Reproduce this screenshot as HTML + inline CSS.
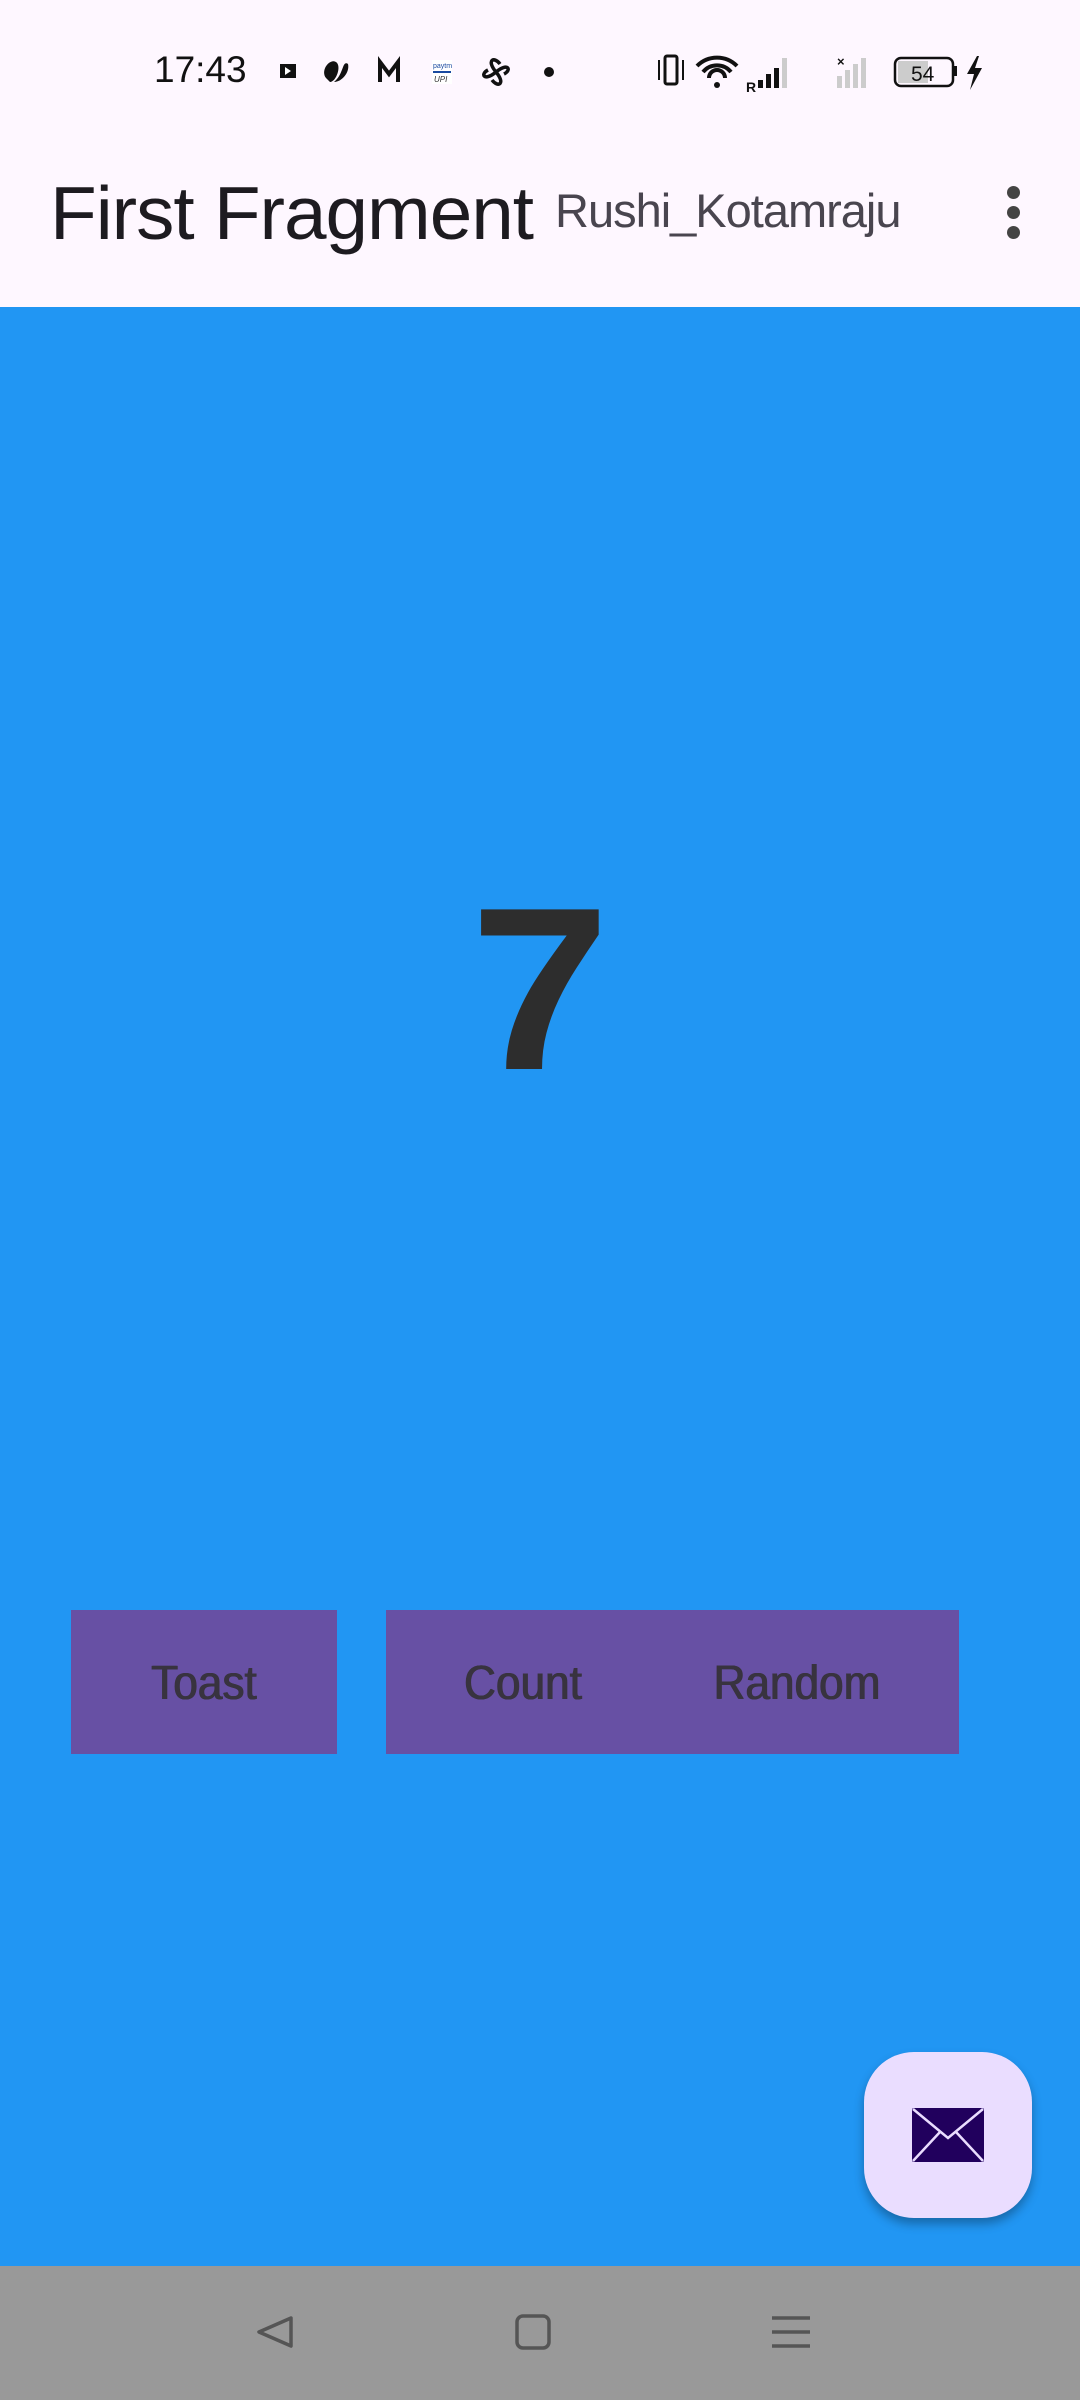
<!DOCTYPE html>
<html><head><meta charset="utf-8"><style>
*{margin:0;padding:0;box-sizing:border-box}
body{width:1080px;height:2400px;position:relative;overflow:hidden;background:#2196F3;font-family:"Liberation Sans",sans-serif}
.top{position:absolute;left:0;top:0;width:1080px;height:307px;background:#FEF7FF}
.abs{position:absolute;white-space:nowrap}
.btn{position:absolute;background:#6750A4;top:1610px;height:144px}
.bt{position:absolute;font-size:48px;color:#38333f;top:1656px;line-height:56px;transform:translateX(-50%) scaleX(0.92);text-shadow:0.6px 0 0 #38333f,-0.6px 0 0 #38333f}
.nav{position:absolute;left:0;top:2266px;width:1080px;height:134px;background:#999}
</style></head><body>
<div class="top"></div>
<div class="abs" style="left:154px;top:48px;font-size:37px;color:#111;line-height:44px">17:43</div>
<svg class="abs" style="left:270px;top:52px" width="300" height="40" viewBox="0 0 300 40">
<rect x="10" y="12" width="16" height="14" fill="#111"/><path d="M15 15 l6 4 l-6 4z" fill="#fff"/>
<path d="M56 26 C50 18 60 6 66 10 C72 14 66 30 60 30z M64 30 C74 22 72 8 78 12 C80 20 72 30 64 30z" fill="#111"/>
<path d="M110 30 V10 L119 22 L128 10 V30" stroke="#111" stroke-width="4" fill="none"/>
<rect x="162" y="8" width="20" height="24" fill="#fff"/><text x="163" y="16" font-size="7" fill="#1a4aa0" font-family="Liberation Sans">paytm</text><rect x="163" y="19" width="18" height="2" fill="#1a4aa0"/><text x="164" y="30" font-size="8" fill="#333" font-style="italic" font-family="Liberation Sans">UPI</text>
<path d="M226 20 C216 8 224 4 230 12 M226 20 C238 10 242 18 234 22 M226 20 C236 32 228 36 222 28 M226 20 C214 30 210 22 218 18" stroke="#111" stroke-width="3.5" fill="none"/>
<circle cx="279" cy="20" r="5" fill="#111"/>
</svg>
<svg class="abs" style="left:655px;top:50px" width="340" height="44" viewBox="0 0 340 44">
<rect x="10" y="6" width="12" height="28" rx="2" stroke="#111" stroke-width="3" fill="none"/><path d="M4 10 v20 M28 10 v20" stroke="#111" stroke-width="2"/>
<path d="M42 16 a28 28 0 0 1 40 0 M48 22 a18 18 0 0 1 28 0 M54 28 a8 8 0 0 1 16 0" stroke="#111" stroke-width="4" fill="none"/><circle cx="62" cy="35" r="3" fill="#111"/>
<text x="91" y="42" font-size="14" font-weight="bold" fill="#111" font-family="Liberation Sans">R</text>
<rect x="103" y="30" width="5" height="8" fill="#111"/><rect x="111" y="24" width="5" height="14" fill="#111"/><rect x="119" y="18" width="5" height="20" fill="#111"/><rect x="127" y="8" width="5" height="30" fill="#ccc"/>
<text x="182" y="16" font-size="13" font-weight="bold" fill="#111" font-family="Liberation Sans">×</text>
<rect x="182" y="26" width="5" height="12" fill="#ccc"/><rect x="190" y="20" width="5" height="18" fill="#ccc"/><rect x="198" y="14" width="5" height="24" fill="#ccc"/><rect x="206" y="8" width="5" height="30" fill="#ccc"/>
<rect x="240" y="8" width="58" height="28" rx="6" stroke="#111" stroke-width="2.5" fill="none"/><rect x="243" y="11" width="30" height="22" fill="#ccc"/><rect x="299" y="16" width="3" height="10" fill="#111"/>
<text x="256" y="31" font-size="21" fill="#111" font-family="Liberation Sans">54</text>
<path d="M322 6 L312 24 L319 24 L315 40 L327 18 L320 18 L324 6z" fill="#111"/>
</svg>
<div class="abs" style="left:50px;top:170px;font-size:75px;color:#1D1B20;line-height:86px;letter-spacing:-1px;transform:scaleX(1.02);transform-origin:left">First Fragment</div>
<div class="abs" style="left:555px;top:184px;font-size:47px;color:#49454F;line-height:54px;letter-spacing:-1px">Rushi_Kotamraju</div>
<div class="abs" style="left:1007px;top:186px;width:13px;height:13px;border-radius:50%;background:#444"></div>
<div class="abs" style="left:1007px;top:206px;width:13px;height:13px;border-radius:50%;background:#444"></div>
<div class="abs" style="left:1007px;top:226px;width:13px;height:13px;border-radius:50%;background:#444"></div>
<div class="abs" style="left:0;width:1080px;text-align:center;top:840px;font-size:232px;font-weight:bold;line-height:300px;color:#2d2d2d;transform:scaleX(1.08)">7</div>
<div class="btn" style="left:71px;width:266px"></div>
<div class="btn" style="left:386px;width:573px"></div>
<div class="bt" style="left:204px">Toast</div>
<div class="bt" style="left:523px">Count</div>
<div class="bt" style="left:797px">Random</div>
<div class="abs" style="left:864px;top:2052px;width:168px;height:166px;border-radius:50px;background:#EADDFF;box-shadow:0 6px 10px rgba(0,0,0,.3)"></div>
<svg class="abs" style="left:912px;top:2108px" width="72" height="54" viewBox="0 0 72 54"><rect x="0" y="0" width="72" height="54" rx="2" fill="#21005D"/><path d="M1 1 L36 30 L71 1 M1 53 L28 24 M71 53 L44 24" stroke="#EADDFF" stroke-width="2.5" fill="none"/></svg>
<div class="nav"></div>
<svg class="abs" style="left:0;top:2266px" width="1080" height="134"><path d="M291 52 L259 66 L291 80z" stroke="#555" stroke-width="3.5" fill="none" stroke-linejoin="round"/><rect x="517" y="50" width="32" height="32" rx="6" stroke="#555" stroke-width="3.5" fill="none"/><path d="M772 52 h38 M772 66 h38 M772 80 h38" stroke="#555" stroke-width="3.5"/></svg>
</body></html>
